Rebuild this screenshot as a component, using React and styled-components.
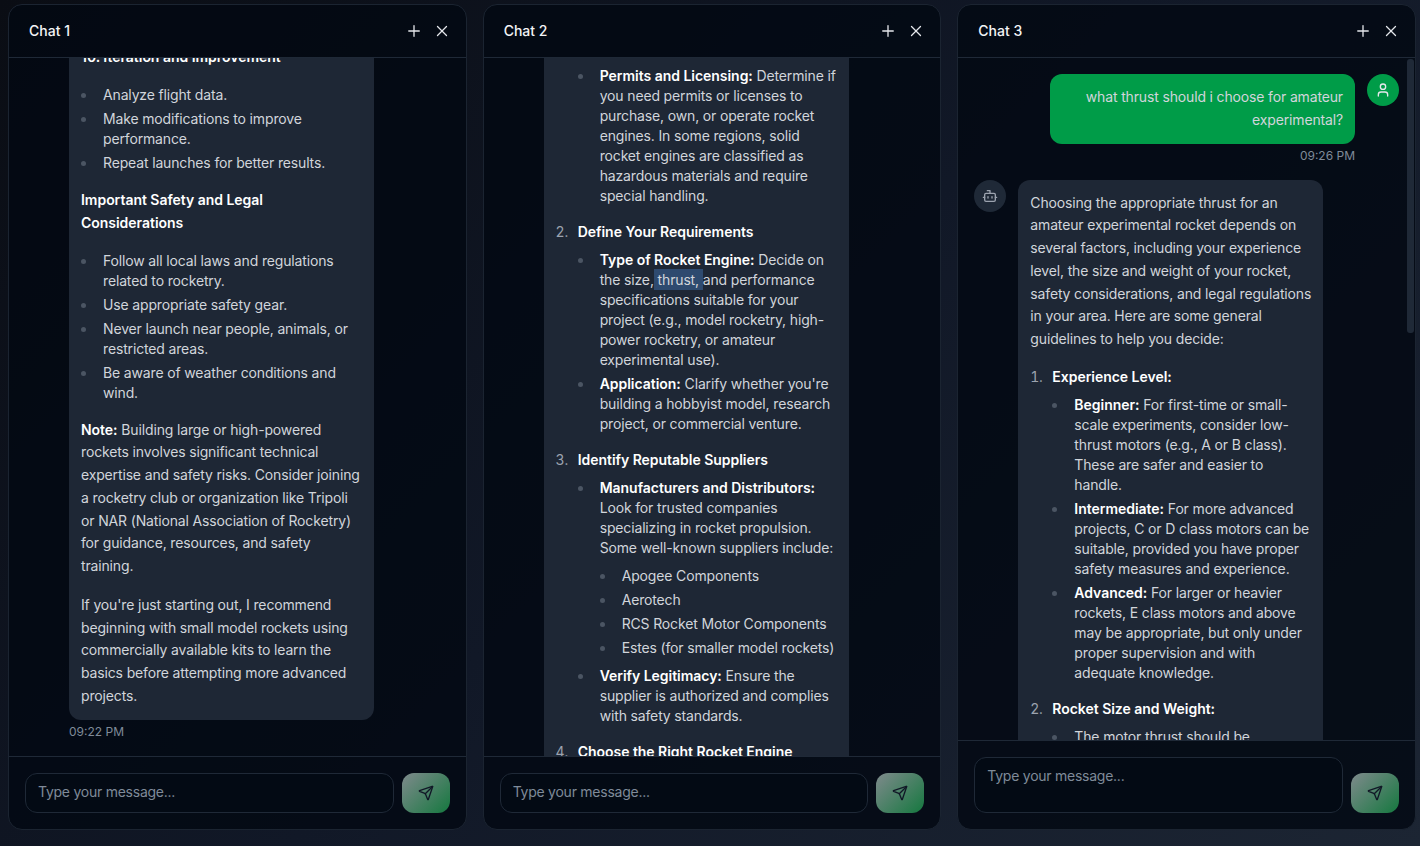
import React from "react";
import styled, { createGlobalStyle } from "styled-components";
import { Bot, Plus, Send, User, X } from "lucide-react";

const GlobalStyle = createGlobalStyle`
  html, body {
    margin: 0;
    padding: 0;
    background: #111827;
  }
  * {
    box-sizing: border-box;
  }
`;

const Page = styled.div`
  width: 1420px;
  height: 846px;
  overflow: hidden;
  padding: 4px 4px 16px 8px;
  display: grid;
  grid-template-columns: repeat(3, 1fr);
  gap: 16px;
  background: linear-gradient(135deg, #0a0d14 0%, #111827 50%, #1c2533 100%);
  font-family: Inter, "Liberation Sans", sans-serif;
`;

const Panel = styled.section`
  display: flex;
  flex-direction: column;
  min-width: 0;
  min-height: 0;
  border: 1px solid #1b2431;
  border-radius: 14px;
  overflow: hidden;
  background: rgba(3, 9, 18, 0.82);
`;

const PanelHeader = styled.header`
  flex: none;
  height: 53px;
  display: flex;
  align-items: center;
  justify-content: space-between;
  padding: 0 12px 0 20px;
  border-bottom: 1px solid #1f2937;
`;

const PanelTitle = styled.h2`
  margin: 0 0 1px;
  font-size: 14px;
  font-weight: 500;
  color: #f3f4f6;
`;

const HeaderActions = styled.div`
  display: flex;
  gap: 4px;
`;

const IconButton = styled.button`
  width: 24px;
  height: 24px;
  display: flex;
  align-items: center;
  justify-content: center;
  padding: 0;
  border: 0;
  background: none;
  color: #e5e7eb;
`;

const MessageList = styled.div`
  position: relative;
  flex: 1;
  min-height: 0;
  overflow: hidden;
  display: flex;
  flex-direction: column;
  justify-content: ${(p) => (p.$anchor === "bottom" ? "flex-end" : "flex-start")};
  gap: 16px;
  padding: 16px;
  padding-bottom: ${(p) => (p.$anchor === "bottom" ? "16.4px" : "16px")};
`;

const ScrollThumb = styled.div`
  position: absolute;
  top: 1px;
  right: 1px;
  width: 7px;
  height: 274px;
  border-radius: 3px;
  background: #1f2937;
`;

const MessageRow = styled.div`
  flex: none;
  display: flex;
  justify-content: ${(p) => (p.$mine ? "flex-end" : "flex-start")};
  gap: 12px;
  margin-top: ${(p) => p.$offset || 0}px;
`;

const Avatar = styled.div`
  flex: none;
  width: 32px;
  height: 32px;
  border-radius: 50%;
  display: flex;
  align-items: center;
  justify-content: center;
  visibility: ${(p) => (p.$scrolledAway ? "hidden" : "visible")};
  background: ${(p) => (p.$mine ? "#009c48" : "#1f2937")};
  color: ${(p) => (p.$mine ? "#e5e7eb" : "#9ca3af")};
`;

const MessageBody = styled.div`
  width: 305px;
`;

const Bubble = styled.div`
  padding: 12px;
  border-radius: 12px;
  font-size: 14px;
  line-height: 22.75px;
  letter-spacing: -0.15px;
  color: #d1d5db;
  background: ${(p) => (p.$mine ? "#009c48" : "#1e2735")};
  text-align: ${(p) => (p.$mine ? "right" : "left")};

  p {
    margin: 16px 0;
  }
  > :first-child {
    margin-top: 0;
  }
  > :last-child {
    margin-bottom: 0;
  }
  strong {
    font-weight: 600;
    letter-spacing: -0.03px;
    color: #ffffff;
  }
  ul,
  ol {
    margin: 16px 0;
    padding-left: 16px;
    line-height: 20px;
  }
  ul {
    list-style-type: disc;
  }
  li {
    padding-left: 6px;
  }
  ul > li::marker {
    color: #4b5563;
  }
  ol > li::marker {
    color: #9ca3af;
  }
  ol > li {
    margin: 16px 0;
  }
  ol > li:first-child {
    margin-top: 0;
  }
  ul > li {
    margin: 4px 0;
  }
  li ul {
    margin: 8px 0;
  }
`;

const Highlight = styled.span`
  padding: 2px 0;
  background: #2e4a6f;
`;

const Time = styled.div`
  margin-top: 4px;
  font-size: 12px;
  line-height: 16px;
  color: #7f8a99;
  text-align: ${(p) => (p.$mine ? "right" : "left")};
`;

const Composer = styled.form`
  flex: none;
  display: flex;
  align-items: flex-end;
  gap: 8px;
  padding: 16px;
  border-top: 1px solid #1f2937;
`;

const MessageInput = styled.textarea`
  flex: 1;
  min-width: 0;
  display: block;
  height: ${(p) => p.$height}px;
  resize: none;
  padding: 8px 12px;
  border: 1px solid #1f2937;
  border-radius: 12px;
  outline: none;
  background: #030a14;
  color: #e5e7eb;
  font-family: inherit;
  font-size: 14px;
  line-height: 20px;
  letter-spacing: -0.25px;

  &::placeholder {
    color: #7f8a99;
    opacity: 1;
  }
`;

const SendButton = styled.button`
  flex: none;
  width: 48px;
  height: 40px;
  display: flex;
  align-items: center;
  justify-content: center;
  padding: 0;
  border: 0;
  border-radius: 12px;
  background: linear-gradient(135deg, #7f8a8c 0%, #15783f 100%);
  color: #111827;
`;

const ChatPanel = ({ title, anchor, inputHeight = 40, scrollbar, children }) => (
  <Panel>
    <PanelHeader>
      <PanelTitle>{title}</PanelTitle>
      <HeaderActions>
        <IconButton type="button">
          <Plus size={18} strokeWidth={1.75} />
        </IconButton>
        <IconButton type="button">
          <X size={18} strokeWidth={1.75} />
        </IconButton>
      </HeaderActions>
    </PanelHeader>
    <MessageList $anchor={anchor}>
      {children}
      {scrollbar && <ScrollThumb />}
    </MessageList>
    <Composer>
      <MessageInput $height={inputHeight} placeholder="Type your message..." />
      <SendButton type="button">
        <Send size={16} />
      </SendButton>
    </Composer>
  </Panel>
);

const App = () => {
  return (
    <>
      <GlobalStyle />
      <Page>
        <ChatPanel title="Chat 1" anchor="bottom">
          <MessageRow>
            <Avatar $scrolledAway />
            <MessageBody>
              <Bubble>
                <p>
                  <strong>10. Iteration and Improvement</strong>
                </p>
                <ul>
                  <li>Analyze flight data.</li>
                  <li>Make modifications to improve performance.</li>
                  <li>Repeat launches for better results.</li>
                </ul>
                <p>
                  <strong>Important Safety and Legal Considerations</strong>
                </p>
                <ul>
                  <li>Follow all local laws and regulations related to rocketry.</li>
                  <li>Use appropriate safety gear.</li>
                  <li>Never launch near people, animals, or restricted areas.</li>
                  <li>Be aware of weather conditions and wind.</li>
                </ul>
                <p>
                  <strong>Note:</strong> Building large or high-powered rockets involves significant
                  technical expertise and safety risks. Consider joining a rocketry club or
                  organization like Tripoli or NAR (National Association of Rocketry) for guidance,
                  resources, and safety training.
                </p>
                <p>
                  If you're just starting out, I recommend beginning with small model rockets using
                  commercially available kits to learn the basics before attempting more advanced
                  projects.
                </p>
              </Bubble>
              <Time>09:22 PM</Time>
            </MessageBody>
          </MessageRow>
        </ChatPanel>

        <ChatPanel title="Chat 2">
          <MessageRow $offset={-48}>
            <Avatar $scrolledAway />
            <MessageBody>
              <Bubble>
                <ol>
                  <li>
                    <strong>Check Regulations</strong>
                    <ul>
                      <li>
                        <strong>Permits and Licensing:</strong> Determine if you need permits or
                        licenses to purchase, own, or operate rocket engines. In some regions, solid
                        rocket engines are classified as hazardous materials and require special
                        handling.
                      </li>
                    </ul>
                  </li>
                  <li>
                    <strong>Define Your Requirements</strong>
                    <ul>
                      <li>
                        <strong>Type of Rocket Engine:</strong> Decide on the size,
                        <Highlight> thrust, </Highlight>
                        and performance specifications suitable for your project (e.g., model
                        rocketry, high-power rocketry, or amateur experimental use).
                      </li>
                      <li>
                        <strong>Application:</strong> Clarify whether you're building a hobbyist
                        model, research project, or commercial venture.
                      </li>
                    </ul>
                  </li>
                  <li>
                    <strong>Identify Reputable Suppliers</strong>
                    <ul>
                      <li>
                        <strong>Manufacturers and Distributors:</strong> Look for trusted companies
                        specializing in rocket propulsion. Some well-known suppliers include:
                        <ul>
                          <li>Apogee Components</li>
                          <li>Aerotech</li>
                          <li>RCS Rocket Motor Components</li>
                          <li>Estes (for smaller model rockets)</li>
                        </ul>
                      </li>
                      <li>
                        <strong>Verify Legitimacy:</strong> Ensure the supplier is authorized and
                        complies with safety standards.
                      </li>
                    </ul>
                  </li>
                  <li>
                    <strong>Choose the Right Rocket Engine</strong>
                  </li>
                </ol>
              </Bubble>
            </MessageBody>
          </MessageRow>
        </ChatPanel>

        <ChatPanel title="Chat 3" inputHeight={56} scrollbar>
          <MessageRow $mine>
            <MessageBody>
              <Bubble $mine>what thrust should i choose for amateur experimental?</Bubble>
              <Time $mine>09:26 PM</Time>
            </MessageBody>
            <Avatar $mine>
              <User size={16} />
            </Avatar>
          </MessageRow>
          <MessageRow>
            <Avatar>
              <Bot size={16} />
            </Avatar>
            <MessageBody>
              <Bubble>
                <p>
                  Choosing the appropriate thrust for an amateur experimental rocket depends on
                  several factors, including your experience level, the size and weight of your
                  rocket, safety considerations, and legal regulations in your area. Here are some
                  general guidelines to help you decide:
                </p>
                <ol>
                  <li>
                    <strong>Experience Level:</strong>
                    <ul>
                      <li>
                        <strong>Beginner:</strong> For first-time or small-scale experiments,
                        consider low-thrust motors (e.g., A or B class). These are safer and easier
                        to handle.
                      </li>
                      <li>
                        <strong>Intermediate:</strong> For more advanced projects, C or D class
                        motors can be suitable, provided you have proper safety measures and
                        experience.
                      </li>
                      <li>
                        <strong>Advanced:</strong> For larger or heavier rockets, E class motors and
                        above may be appropriate, but only under proper supervision and with
                        adequate knowledge.
                      </li>
                    </ul>
                  </li>
                  <li>
                    <strong>Rocket Size and Weight:</strong>
                    <ul>
                      <li>The motor thrust should be</li>
                    </ul>
                  </li>
                </ol>
              </Bubble>
            </MessageBody>
          </MessageRow>
        </ChatPanel>
      </Page>
    </>
  );
};

export default App;
